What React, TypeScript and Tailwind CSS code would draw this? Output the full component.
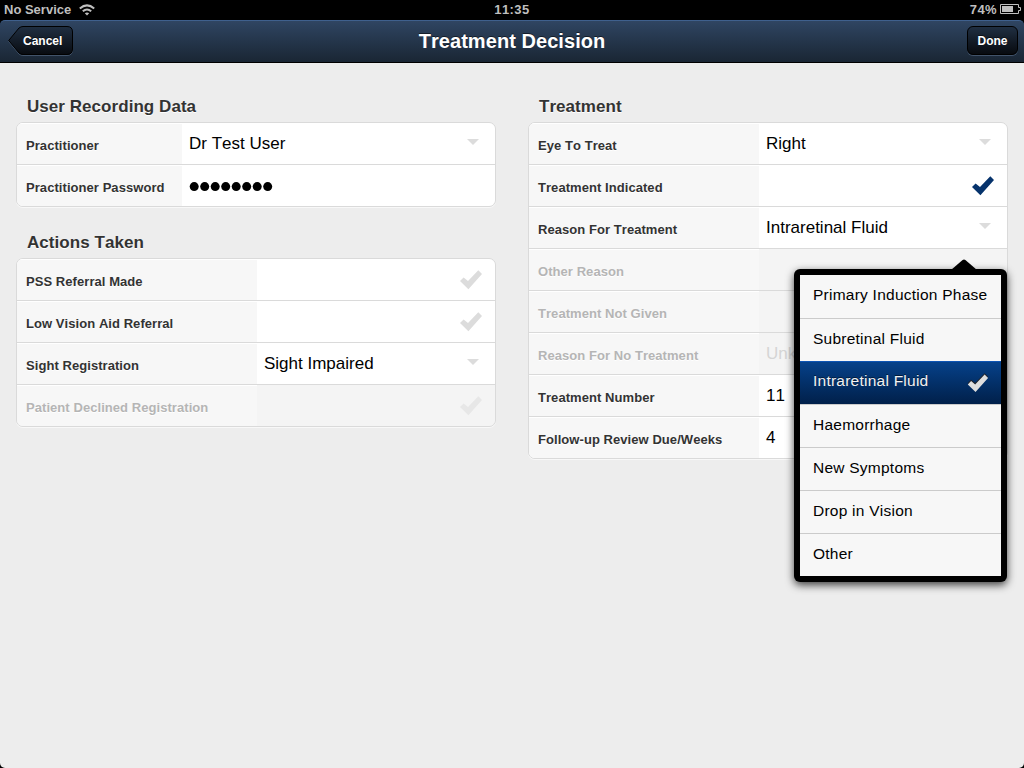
import type { ReactNode } from "react";

const CHECK_PATH = "M0 11 L3.6 7.4 L8 11 L18.3 0.3 L22 3.9 L8.4 19.2 Z";

function Check({ className }: { className: string }) {
  return (
    <svg width="22" height="20" viewBox="0 0 22 20" className={className}>
      <path d={CHECK_PATH} fill="currentColor" />
    </svg>
  );
}

function Arrow() {
  return (
    <svg width="12" height="6" viewBox="0 0 12 6" className="mr-[16px] mb-[3px] shrink-0 text-[#dcdcdc]">
      <path d="M0 0H12L6 6Z" fill="currentColor" />
    </svg>
  );
}

type RowProps = {
  label: string;
  labelWidth: string;
  disabled?: boolean;
  value?: string;
  children?: ReactNode;
};

function Row({ label, labelWidth, disabled, value, children }: RowProps) {
  return (
    <div className={`flex h-[42px] border-b border-[#dadada] last:border-b-0 last:h-[41px] ${disabled ? "bg-[#f4f4f4]" : "bg-white"}`}>
      <div className={`flex shrink-0 items-center border-t border-white bg-[#f7f7f7] pl-[9px] pt-[4px] text-[13px] leading-[16px] font-bold tracking-[0.06px] whitespace-nowrap [text-shadow:0_1px_0_#fff] ${labelWidth} ${disabled ? "text-[#b5b5b5]" : "text-[#333]"}`}>
        {label}
      </div>
      <div className="flex min-w-0 flex-1 items-center justify-between pl-[7px]">
        <span className={`text-[17px] leading-[20px] whitespace-nowrap ${disabled ? "text-[#d5d5d5]" : "text-black"}`}>{value}</span>
        {children}
      </div>
    </div>
  );
}

function Group({ title, children }: { title: string; children: ReactNode }) {
  return (
    <section>
      <h2 className="mb-[5px] pt-[1px] pl-[11px] text-[17px] leading-[20px] font-bold tracking-[0.05px] text-[#333] [text-shadow:0_1px_0_#fff]">{title}</h2>
      <div className="overflow-hidden rounded-[7px] border border-[#dadada] shadow-[0_1px_0_#f8f8f8]">{children}</div>
    </section>
  );
}

const OPTIONS = [
  "Primary Induction Phase",
  "Subretinal Fluid",
  "Intraretinal Fluid",
  "Haemorrhage",
  "New Symptoms",
  "Drop in Vision",
  "Other",
];

function Popover() {
  return (
    <div className="absolute top-[269px] left-[794px] h-[313px] w-[213px] rounded-[6px] bg-black p-[6px] shadow-[0_3px_8px_rgba(0,0,0,0.75)]">
      <svg width="26" height="11" viewBox="0 0 26 11" className="absolute top-[-10px] left-[157px]">
        <path d="M0 11L11.6 0.9Q13 0 14.4 0.9L26 11Z" fill="#000" />
      </svg>
      <ul className="h-[301px] bg-[#f7f7f7]">
        {OPTIONS.map((name, i) => {
          const selected = name === "Intraretinal Fluid";
          const first = i === 0;
          return (
            <li
              key={name}
              className={`flex justify-between pl-[13px] text-[15.5px] leading-[18px] tracking-[0.24px] whitespace-nowrap ${
                selected
                  ? "h-[43px] border-t border-[#0d54b4] bg-linear-to-b from-[#06418a] to-[#01204a] pt-[10px] text-[#f2f2f2] [text-shadow:0_-1px_0_rgba(0,0,0,0.5)]"
                  : first
                    ? "h-[44px] border-b border-[#cbcbcb] pt-[11px] text-black"
                    : i === 1
                      ? "h-[42px] pt-[11px] text-black"
                      : "h-[43px] border-t border-[#cbcbcb] pt-[11px] text-black"
              }`}
            >
              {name}
              {selected && (
                <svg width="22" height="21" viewBox="0 0 22 21" className="mr-[12px] mt-[1px]">
                  <path d={CHECK_PATH} fill="#20242c" transform="translate(0.8 0) scale(.92)" />
                  <path d={CHECK_PATH} fill="#dedede" transform="translate(0.8 1.3) scale(.92)" />
                </svg>
              )}
            </li>
          );
        })}
      </ul>
    </div>
  );
}

function StatusBar() {
  return (
    <div className="grid h-[20px] grid-cols-3 items-center bg-black text-[13px] leading-[20px] font-bold text-[#bfbfbf]">
      <div className="flex items-center pl-[4px]">
        <span>No Service</span>
        <svg width="16" height="12" viewBox="0 0 16 12" className="ml-[8px]" fill="none" stroke="#bfbfbf" strokeWidth="2">
          <path d="M0.8 4.5Q8 -1.8 15.2 4.5" />
          <path d="M3.8 7.3Q8 3.6 12.2 7.3" />
          <path d="M8 11.4L5.8 9.3Q8 7.7 10.2 9.3Z" fill="#bfbfbf" stroke="none" />
        </svg>
      </div>
      <div className="text-center tracking-[0.4px]">11:35</div>
      <div className="flex items-center justify-end pr-[3px]">
        <span className="mr-[3px] tracking-[0.4px]">74%</span>
        <svg width="21" height="10" viewBox="0 0 21 10" className="mb-[2px]">
          <path d="M0.5 0.5H18.5V3.5H20.5V6.5H18.5V9.5H0.5Z" fill="none" stroke="#bfbfbf" />
          <rect x="2" y="2" width="11" height="6" fill="#bfbfbf" />
        </svg>
      </div>
    </div>
  );
}

function NavBar() {
  return (
    <header className="grid h-[43px] grid-cols-[1fr_auto_1fr] items-start rounded-t-[5px] border-t border-b border-t-[#3f608d] border-b-black bg-linear-to-b from-[#2f4562] to-[#1a2634] pt-[5px]">
      <div className="relative ml-[8px] h-[30px] w-[66px]">
        <svg width="66" height="31" viewBox="0 0 66 31" className="absolute inset-0">
          <defs>
            <linearGradient id="back" x1="0" y1="0" x2="0" y2="1">
              <stop offset="0" stopColor="#202f42" />
              <stop offset="1" stopColor="#080b10" />
            </linearGradient>
          </defs>
          <path d="M0.7 15.5L11 3Q13 1.5 15 1.5H59Q64.5 1.5 64.5 7V24Q64.5 29.5 59 29.5H15Q13 29.5 11 28Z" fill="none" stroke="#41536a" />
          <path d="M0.7 14.5L11 2Q13 0.5 15 0.5H59Q64.5 0.5 64.5 6V23Q64.5 28.5 59 28.5H15Q13 28.5 11 27Z" fill="url(#back)" stroke="#000" />
        </svg>
        <span className="relative block pl-[15px] text-[12px] leading-[30px] font-bold text-white [text-shadow:0_-1px_0_rgba(0,0,0,0.5)]">Cancel</span>
      </div>
      <h1 className="mt-[3px] text-[20px] leading-[24px] font-bold tracking-[0.06px] text-white [text-shadow:0_-1px_0_rgba(0,0,0,0.5)]">Treatment Decision</h1>
      <div className="mr-[6px] flex h-[29px] w-[51px] items-center justify-center justify-self-end rounded-[6px] border border-black bg-linear-to-b from-[#202f42] to-[#080b10] pt-[1px] text-[12px] leading-[16px] font-bold text-white shadow-[0_1px_0_#41536a] [text-shadow:0_-1px_0_rgba(0,0,0,0.5)]">
        Done
      </div>
    </header>
  );
}

export default function App() {
  return (
    <div className="relative h-[768px] w-[1024px] overflow-hidden bg-black font-['Liberation_Sans',Arial,sans-serif] [font-kerning:none]">
      <StatusBar />
      <NavBar />
      <main className="grid h-[705px] grid-cols-2 rounded-b-[5px] bg-[#ededed] pt-[33px]">
        <div className="flex flex-col gap-[25px] pr-[16px] pl-[16px]">
          <Group title="User Recording Data">
            <Row label="Practitioner" labelWidth="w-[165px]" value="Dr Test User">
              <Arrow />
            </Row>
            <Row label="Practitioner Password" labelWidth="w-[165px]">
              <svg width="84" height="10" viewBox="0 0 84 10" className="mr-auto mb-[-2px]">
                {Array.from({ length: 8 }, (_, i) => (
                  <circle key={i} cx={5.2 + i * 10.5} cy="4.6" r="4.5" fill="#000" />
                ))}
              </svg>
            </Row>
          </Group>
          <Group title="Actions Taken">
            <Row label="PSS Referral Made" labelWidth="w-[240px]">
              <Check className="mr-[13px] text-[#dcdcdc]" />
            </Row>
            <Row label="Low Vision Aid Referral" labelWidth="w-[240px]">
              <Check className="mr-[13px] text-[#dcdcdc]" />
            </Row>
            <Row label="Sight Registration" labelWidth="w-[240px]" value="Sight Impaired">
              <Arrow />
            </Row>
            <Row label="Patient Declined Registration" labelWidth="w-[240px]" disabled>
              <Check className="mr-[13px] text-[#e7e7e7]" />
            </Row>
          </Group>
        </div>
        <div className="px-[16px]">
          <Group title="Treatment">
            <Row label="Eye To Treat" labelWidth="w-[230px]" value="Right">
              <Arrow />
            </Row>
            <Row label="Treatment Indicated" labelWidth="w-[230px]">
              <Check className="mr-[13px] text-[#06336c]" />
            </Row>
            <Row label="Reason For Treatment" labelWidth="w-[230px]" value="Intraretinal Fluid">
              <Arrow />
            </Row>
            <Row label="Other Reason" labelWidth="w-[230px]" disabled />
            <Row label="Treatment Not Given" labelWidth="w-[230px]" disabled />
            <Row label="Reason For No Treatment" labelWidth="w-[230px]" value="Unknown" disabled />
            <Row label="Treatment Number" labelWidth="w-[230px]" value="11" />
            <Row label="Follow-up Review Due/Weeks" labelWidth="w-[230px]" value="4" />
          </Group>
        </div>
      </main>
      <Popover />
    </div>
  );
}
